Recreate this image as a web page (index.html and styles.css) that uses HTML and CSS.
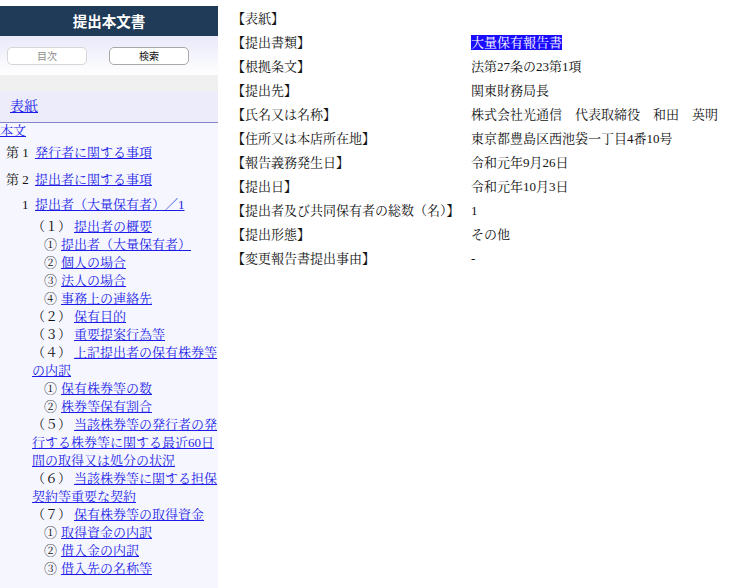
FILE: index.html
```html
<!DOCTYPE html>
<html lang="ja">
<head>
<meta charset="utf-8">
<title>提出本文書</title>
<link rel="stylesheet" href="styles.css">
</head>
<body>
<aside class="side">
  <div class="top-gap"></div>
  <div class="title">提出本文書</div>
  <div class="tools">
    <span class="btn btn-off">目次</span>
    <span class="btn">検索</span>
  </div>
  <div class="grey"></div>
  <div class="toc-head"><a href="#">表紙</a></div>
  <div class="toc">
    <div class="honbun"><a href="#">本文</a></div>
    <div class="row dai d1"><span class="lbl">第 1</span><a href="#">発行者に関する事項</a></div>
    <div class="row dai d2"><span class="lbl">第 2</span><a href="#">提出者に関する事項</a></div>
    <div class="row one"><span class="lbl">1</span><a href="#">提出者（大量保有者）／1 </a></div>
    <div class="row sub s1"><span class="lbl">（１）</span><a href="#">提出者の概要</a></div>
    <div class="row circ"><span class="lbl">①</span><a href="#">提出者（大量保有者）</a></div>
    <div class="row circ"><span class="lbl">②</span><a href="#">個人の場合</a></div>
    <div class="row circ"><span class="lbl">③</span><a href="#">法人の場合</a></div>
    <div class="row circ"><span class="lbl">④</span><a href="#">事務上の連絡先</a></div>
    <div class="row sub"><span class="lbl">（２）</span><a href="#">保有目的</a></div>
    <div class="row sub"><span class="lbl">（３）</span><a href="#">重要提案行為等</a></div>
    <div class="row sub"><span class="lbl">（４）</span><a href="#">上記提出者の保有株券等の内訳</a></div>
    <div class="row circ"><span class="lbl">①</span><a href="#">保有株券等の数</a></div>
    <div class="row circ"><span class="lbl">②</span><a href="#">株券等保有割合</a></div>
    <div class="row sub"><span class="lbl">（５）</span><a href="#">当該株券等の発行者の発行する株券等に関する最近60日間の取得又は処分の状況</a></div>
    <div class="row sub"><span class="lbl">（６）</span><a href="#">当該株券等に関する担保契約等重要な契約</a></div>
    <div class="row sub"><span class="lbl">（７）</span><a href="#">保有株券等の取得資金</a></div>
    <div class="row circ"><span class="lbl">①</span><a href="#">取得資金の内訳</a></div>
    <div class="row circ"><span class="lbl">②</span><a href="#">借入金の内訳</a></div>
    <div class="row circ"><span class="lbl">③</span><a href="#">借入先の名称等</a></div>
  </div>
</aside>
<main class="main">
  <table class="cover">
    <tr><td class="k">【表紙】</td><td class="v"></td></tr>
    <tr><td class="k">【提出書類】</td><td class="v"><span class="sel">大量保有報告書</span></td></tr>
    <tr><td class="k">【根拠条文】</td><td class="v">法第27条の23第1項</td></tr>
    <tr><td class="k">【提出先】</td><td class="v">関東財務局長</td></tr>
    <tr><td class="k">【氏名又は名称】</td><td class="v">株式会社光通信　代表取締役　和田　英明</td></tr>
    <tr><td class="k">【住所又は本店所在地】</td><td class="v">東京都豊島区西池袋一丁目4番10号</td></tr>
    <tr><td class="k">【報告義務発生日】</td><td class="v">令和元年9月26日</td></tr>
    <tr><td class="k">【提出日】</td><td class="v">令和元年10月3日</td></tr>
    <tr><td class="k">【提出者及び共同保有者の総数（名）】</td><td class="v">1</td></tr>
    <tr><td class="k">【提出形態】</td><td class="v">その他</td></tr>
    <tr><td class="k">【変更報告書提出事由】</td><td class="v">-</td></tr>
  </table>
</main>
</body>
</html>
```
FILE: styles.css
```css
html, body {
  margin: 0;
  padding: 0;
  background: #ffffff;
}
body {
  display: flex;
  align-items: flex-start;
  height: 588px;
  overflow: hidden;
  font-family: "Liberation Serif", "Noto Serif CJK JP", "Noto Sans CJK JP", serif;
  font-size: 13px;
  color: #111111;
}
a {
  color: #1c1ce8;
  text-decoration: underline;
}

/* sidebar */
.side {
  width: 218px;
  flex: none;
  height: 588px;
  background: #f6f7fe;
  display: flex;
  flex-direction: column;
}
.top-gap {
  height: 6px;
  background: #ffffff;
}
.title {
  height: 30px;
  background: #1f3b57;
  color: #ffffff;
  font-family: "Noto Sans CJK JP", sans-serif;
  font-weight: bold;
  font-size: 14.5px;
  line-height: 30px;
  text-align: center;
}
.tools {
  height: 39px;
  box-sizing: border-box;
  padding: 11px 0 0 7px;
  display: flex;
  gap: 22px;
  background: linear-gradient(#e9e9fa, #ffffff);
}
.btn {
  width: 80px;
  height: 18px;
  box-sizing: border-box;
  border: 1px solid #a8a8a8;
  border-radius: 5px;
  background: #ffffff;
  font-family: "Noto Sans CJK JP", sans-serif;
  font-size: 10px;
  line-height: 16px;
  text-align: center;
  color: #111111;
}
.btn-off {
  border-color: #d6d6d6;
  color: #8a8a8a;
}
.grey {
  height: 16px;
  background: #f0f0f0;
}
.toc-head {
  height: 31px;
  background: #ececfb;
  border-bottom: 1px solid #8484c8;
  padding-left: 10px;
  font-size: 14px;
  line-height: 31px;
}
.toc {
  flex: 1;
  line-height: 18px;
}
.honbun {
  line-height: 15px;
}
.row {
  line-height: 18px;
}
.lbl {
  display: inline-block;
}
.dai {
  padding-left: 6px;
}
.dai .lbl {
  width: 29px;
}
.d1 { margin-top: 6px; }
.d2 { margin-top: 9px; }
.one {
  margin-top: 7px;
  padding-left: 22px;
}
.one .lbl { width: 13px; }
.sub {
  padding-left: 32px;
}
.s1 { margin-top: 4px; }
.sub .lbl { width: 42px; }
.circ {
  padding-left: 44px;
}
.circ .lbl { width: 17px; }

/* main */
.main {
  flex: 1;
  padding: 6px 0 0 14px;
}
.cover {
  border-collapse: collapse;
}
.cover td {
  padding: 0;
  height: 24px;
  line-height: 15px;
  vertical-align: middle;
  white-space: nowrap;
}
.cover .k {
  width: 239px;
}
.sel {
  background: #1a0cff;
  color: #ffffff;
}
```
